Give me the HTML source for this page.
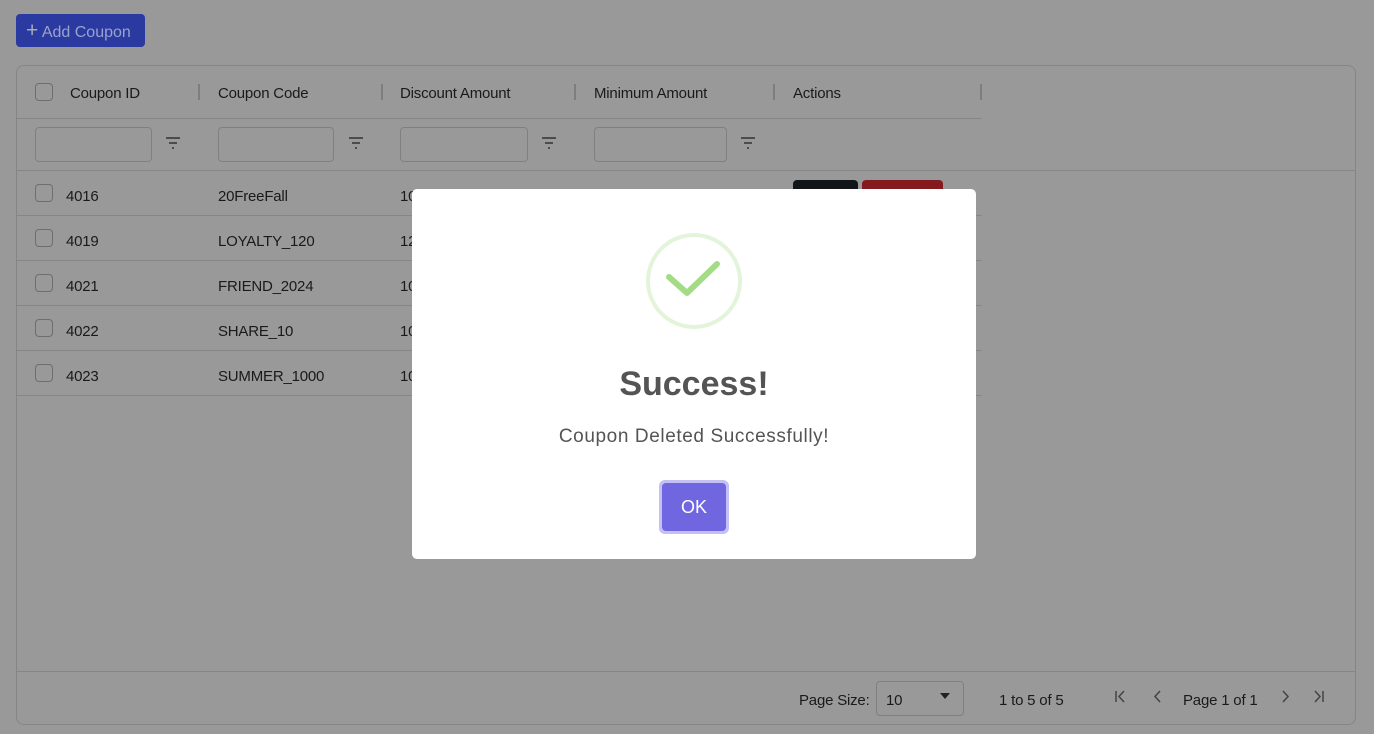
<!DOCTYPE html>
<html><head><meta charset="utf-8"><style>
*{box-sizing:border-box;margin:0;padding:0}
body{width:1374px;height:734px;background:#999;font-family:"Liberation Sans",sans-serif;position:relative;overflow:hidden;color:#111}
.abs{position:absolute}
.btn{left:16px;top:14px;width:129px;height:33px;background:#2a3aa0;border-radius:4px;color:#9aa2cc;font-size:16px;line-height:33px;padding-left:10px}
.tbl{left:16px;top:65px;width:1340px;height:660px;border:1px solid #858585;border-radius:8px}
.hl{height:1px;background:#868686}
.t{font-size:15px;color:#1a1a1a;letter-spacing:-0.2px}
.cb{width:18px;height:18px;border:1.5px solid #6e6e6e;border-radius:4px}
.sep{width:2px;height:16px;background:#7e7e7e}
.inp{height:35px;border:1px solid #808080;border-radius:4px}
.modal{left:412px;top:189px;width:564px;height:370px;background:#fff;border-radius:5px}
</style></head><body>
<div class="abs btn"><span style="font-size:21px;color:#aab">+</span> Add Coupon</div>
<div class="abs tbl"></div>
<div class="abs hl" style="left:17px;top:118px;width:965px"></div>
<div class="abs hl" style="left:17px;top:170px;width:1338px"></div>
<div class="abs hl" style="left:17px;top:215px;width:965px"></div>
<div class="abs hl" style="left:17px;top:260px;width:965px"></div>
<div class="abs hl" style="left:17px;top:305px;width:965px"></div>
<div class="abs hl" style="left:17px;top:350px;width:965px"></div>
<div class="abs hl" style="left:17px;top:395px;width:965px"></div>
<div class="abs hl" style="left:17px;top:671px;width:1338px"></div>
<div class="abs cb" style="left:35px;top:83px"></div>
<div class="abs t" style="left:70px;top:85px">Coupon ID</div>
<div class="abs sep" style="left:198px;top:84px"></div>
<div class="abs t" style="left:218px;top:85px">Coupon Code</div>
<div class="abs sep" style="left:381px;top:84px"></div>
<div class="abs t" style="left:400px;top:85px">Discount Amount</div>
<div class="abs sep" style="left:574px;top:84px"></div>
<div class="abs t" style="left:594px;top:85px">Minimum Amount</div>
<div class="abs sep" style="left:773px;top:84px"></div>
<div class="abs t" style="left:793px;top:85px">Actions</div>
<div class="abs sep" style="left:980px;top:84px"></div>
<div class="abs inp" style="left:35px;top:127px;width:117px"></div>
<div class="abs inp" style="left:218px;top:127px;width:116px"></div>
<div class="abs inp" style="left:400px;top:127px;width:128px"></div>
<div class="abs inp" style="left:594px;top:127px;width:133px"></div>
<svg class="abs" style="left:165px;top:136px" width="16" height="14"><path d="M1 2h14M4 7h8M7 12h2" stroke="#333" stroke-width="1.6"/></svg>
<svg class="abs" style="left:348px;top:136px" width="16" height="14"><path d="M1 2h14M4 7h8M7 12h2" stroke="#333" stroke-width="1.6"/></svg>
<svg class="abs" style="left:541px;top:136px" width="16" height="14"><path d="M1 2h14M4 7h8M7 12h2" stroke="#333" stroke-width="1.6"/></svg>
<svg class="abs" style="left:740px;top:136px" width="16" height="14"><path d="M1 2h14M4 7h8M7 12h2" stroke="#333" stroke-width="1.6"/></svg>
<div class="abs cb" style="left:35px;top:184px"></div><div class="abs t" style="left:66px;top:188px">4016</div><div class="abs t" style="left:218px;top:188px">20FreeFall</div><div class="abs t" style="left:400px;top:188px">10</div>
<div class="abs cb" style="left:35px;top:229px"></div><div class="abs t" style="left:66px;top:233px">4019</div><div class="abs t" style="left:218px;top:233px">LOYALTY_120</div><div class="abs t" style="left:400px;top:233px">12</div>
<div class="abs cb" style="left:35px;top:274px"></div><div class="abs t" style="left:66px;top:278px">4021</div><div class="abs t" style="left:218px;top:278px">FRIEND_2024</div><div class="abs t" style="left:400px;top:278px">10</div>
<div class="abs cb" style="left:35px;top:319px"></div><div class="abs t" style="left:66px;top:323px">4022</div><div class="abs t" style="left:218px;top:323px">SHARE_10</div><div class="abs t" style="left:400px;top:323px">10</div>
<div class="abs cb" style="left:35px;top:364px"></div><div class="abs t" style="left:66px;top:368px">4023</div><div class="abs t" style="left:218px;top:368px">SUMMER_1000</div><div class="abs t" style="left:400px;top:368px">10</div>
<div class="abs" style="left:793px;top:180px;width:65px;height:30px;background:#131619;border-radius:4px"></div>
<div class="abs" style="left:862px;top:180px;width:81px;height:30px;background:#841a1d;border-radius:4px"></div>
<div class="abs t" style="left:799px;top:692px">Page Size:</div>
<div class="abs" style="left:876px;top:681px;width:88px;height:35px;border:1px solid #808080;border-radius:4px"></div>
<div class="abs t" style="left:886px;top:692px">10</div>
<svg class="abs" style="left:939px;top:692px" width="12" height="8"><path d="M1 1h10L6 7z" fill="#222"/></svg>
<div class="abs t" style="left:999px;top:692px">1 to 5 of 5</div>
<div class="abs t" style="left:1183px;top:692px">Page 1 of 1</div>
<svg class="abs" style="left:1114px;top:689px" width="220" height="16" fill="none" stroke="#444" stroke-width="1.5"><path d="M2 2v11M10 2L5 7.5 10 13"/><path d="M46 2L41 7.5 46 13"/><path d="M169 2l5 5.5-5 5.5"/><path d="M201 2l5 5.5-5 5.5M209 2v11"/></svg>
<div class="abs modal"></div>
<svg class="abs" style="left:645px;top:232px" width="98" height="98"><circle cx="49" cy="49" r="46" fill="none" stroke="#e4f4da" stroke-width="4"/><path d="M24 45l18 16 30-29" fill="none" stroke="#a4dc86" stroke-width="6" stroke-linecap="round" stroke-linejoin="round"/></svg>
<div class="abs" style="left:412px;top:365px;width:564px;text-align:center;font-size:34px;font-weight:bold;color:#545454">Success!</div>
<div class="abs" style="left:412px;top:426px;width:564px;text-align:center;font-size:19px;letter-spacing:0.6px;color:#545454">Coupon Deleted Successfully!</div>
<div class="abs" style="left:659px;top:480px;width:70px;height:54px;border-radius:6px;background:#c4bff4"></div>
<div class="abs" style="left:662px;top:483px;width:64px;height:48px;border-radius:4px;background:#7066e0;color:#fff;font-size:18px;line-height:48px;text-align:center">OK</div>
</body></html>
